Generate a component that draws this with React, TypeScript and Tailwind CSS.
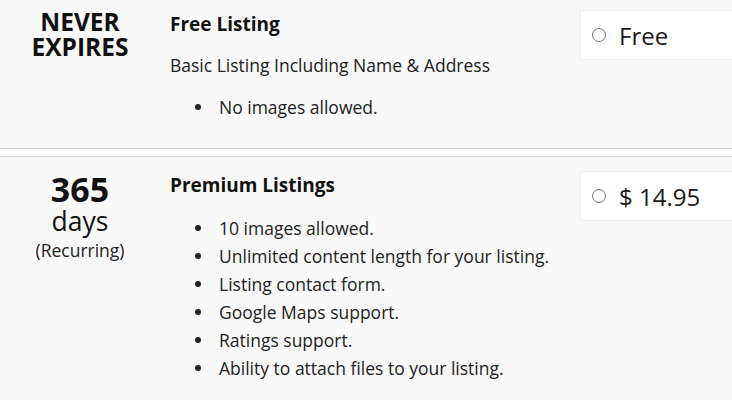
const font = { fontFamily: '"Open Sans", "Liberation Sans", sans-serif' };

function PriceBox({ label }: { label: string }) {
  return (
    <div className="flex h-[50px] w-[180px] items-center border border-[#eeeeee] bg-white pl-[11px]">
      <span className="h-[14px] w-[14px] rounded-full border border-[#767676] bg-white" />
      <span className="ml-[13px] pt-[2px] text-[24px] leading-none text-[#1a1a1a]">{label}</span>
    </div>
  );
}

function Bullets({ items }: { items: string[] }) {
  return (
    <ul className="text-[17.5px] leading-[28px] text-[#222]">
      {items.map((item) => (
        <li key={item} className="flex items-center">
          <span className="ml-[25px] h-[6px] w-[6px] shrink-0 rounded-full bg-[#222]" />
          <span className="ml-[18px]">{item}</span>
        </li>
      ))}
    </ul>
  );
}

export default function App() {
  return (
    <div className="h-[400px] w-[732px] overflow-hidden bg-white" style={font}>
      {/* Free row */}
      <div className="flex h-[149px] border-b border-[#d4d4d4] bg-[#f9f9f9] pt-[9px]">
        <div className="w-[160px] shrink-0 text-center text-[24.5px] font-bold leading-[25px] text-[#111]">
          NEVER
          <br />
          EXPIRES
        </div>
        <div className="w-[410px] shrink-0 pl-[10px]">
          <h2 className="pt-[1px] text-[19px] font-bold leading-[28px] text-[#111]">Free Listing</h2>
          <p className="mt-[15px] text-[17.5px] leading-[24px] text-[#222]">
            Basic Listing Including Name &amp; Address
          </p>
          <div className="mt-[16px]">
            <Bullets items={["No images allowed."]} />
          </div>
        </div>
        <div className="shrink-0 pl-[10px] pt-[1px]">
          <PriceBox label="Free" />
        </div>
      </div>

      {/* Premium row */}
      <div className="mt-[7px] flex h-[260px] border-t border-[#d4d4d4] bg-[#f9f9f9] pt-[14px]">
        <div className="w-[160px] shrink-0 text-center text-[#111]">
          <div className="text-[34px] font-bold leading-[36px]">365</div>
          <div className="text-[26.5px] leading-[28px]">days</div>
          <div className="mt-[2px] text-[17.5px] leading-[26px] text-[#222]">(Recurring)</div>
        </div>
        <div className="w-[410px] shrink-0 pl-[10px]">
          <h2 className="text-[19px] font-bold leading-[28px] text-[#111]">Premium Listings</h2>
          <div className="mt-[15px]">
            <Bullets
              items={[
                "10 images allowed.",
                "Unlimited content length for your listing.",
                "Listing contact form.",
                "Google Maps support.",
                "Ratings support.",
                "Ability to attach files to your listing.",
              ]}
            />
          </div>
        </div>
        <div className="shrink-0 pl-[10px]">
          <PriceBox label="$ 14.95" />
        </div>
      </div>
    </div>
  );
}
